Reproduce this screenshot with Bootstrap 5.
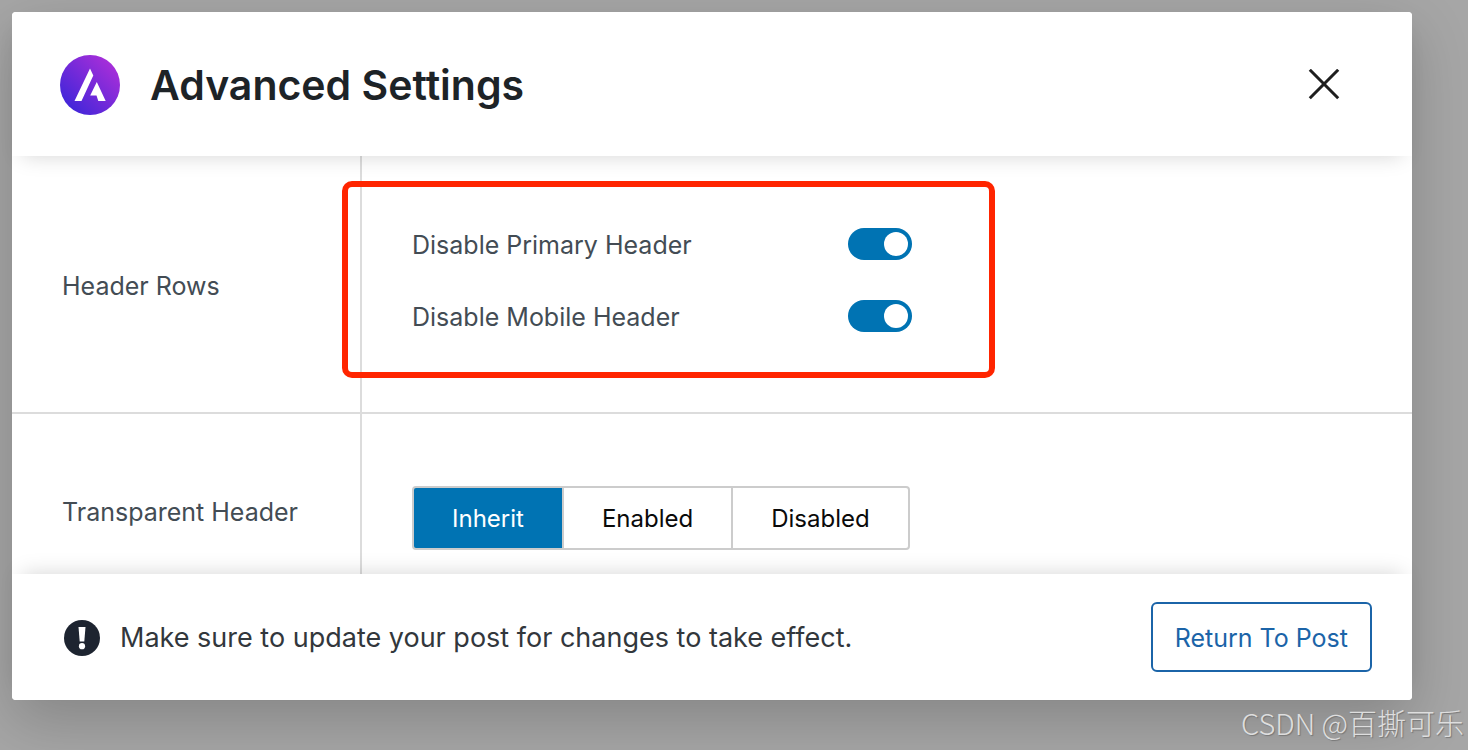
<!DOCTYPE html>
<html lang="en">
<head>
<meta charset="utf-8">
<meta name="viewport" content="width=device-width, initial-scale=1">
<title>Advanced Settings</title>
<link href="https://cdn.jsdelivr.net/npm/bootstrap@5.3.0/dist/css/bootstrap.min.css" rel="stylesheet">
<style>
  body { font-family: Inter, "Noto Sans CJK SC", sans-serif; font-size: 25px; line-height: 40px; color: #434c54; background: #a6a6a6; }
  .backdrop-area { padding: 12px 56px 50px 12px; }
  .settings-dialog { border-radius: 4px; box-shadow: 0 20px 60px rgba(0,0,0,.2); }
  .dialog-top { padding: 42px 68px 40px 48px; min-height: 144px; box-shadow: 0 10px 20px -10px rgba(0,0,0,.17); z-index: 2; }
  .dialog-top h1 { font-size: 41px; line-height: 60px; font-weight: 600; color: #1d2327; }
  .title-group { gap: 30px; }
  .close-btn { width: 40px; height: 40px; }
  .setting-row { border-bottom: 2px solid #dcdcdc; }
  .setting-name { width: 350px; padding: 0 50px; border-right: 2px solid #dcdcdc; }
  .toggle-cell { padding: 68px 50px 76px; }
  .toggle-list { max-width: 500px; gap: 32px; }
  .toggle-list label { padding-top: 2px; line-height: 38px; }
  .choice-cell { padding: 72px 50px 60px; }
  .form-switch .form-check-input.toggle { width: 64px; height: 32px; border: 0; background-color: #0073b3;
    background-image: url("data:image/svg+xml,%3csvg xmlns='http://www.w3.org/2000/svg' viewBox='0 0 32 32'%3e%3ccircle r='12' cx='16' cy='16' fill='%23fff'/%3e%3c/svg%3e"); background-size: 32px 32px; }
  .highlight-box { left: -20px; top: 25px; width: 653px; height: 197px; border: 6px solid #ff2500; border-radius: 10px; pointer-events: none; }
  .choices .btn { --bs-btn-border-width: 2px; --bs-btn-border-color: #ccc; --bs-btn-color: #0a0a0a; --bs-btn-bg: #fff; --bs-btn-hover-border-color: #ccc;
    --bs-btn-active-bg: #0073b3; --bs-btn-active-border-color: #ccc; --bs-btn-active-color: #fff; --bs-btn-border-radius: 4px;
    font-size: 24px; line-height: 40px; padding: 11px 38px 9px; }
  .choices .btn + .btn { margin-left: -2px !important; }
  .dialog-bottom { padding: 28px 40px 28px 52px; box-shadow: 0 -10px 20px -10px rgba(0,0,0,.17); z-index: 2; }
  .notice { gap: 20px; padding-top: 2px; font-size: 27px; color: #32373c; }
  .return-btn { --bs-btn-color: #1b64a8; --bs-btn-border-color: #1b64a8; --bs-btn-border-width: 2px; --bs-btn-border-radius: 6px; font-size: 25px; line-height: 40px; padding: 14px 22px 12px; }
  .watermark { right: 4px; bottom: 8px; font-family: "Noto Sans CJK SC", sans-serif; font-weight: 300; font-size: 29px; color: #dedede; text-shadow: 1px 1px 1px #777; z-index: 3; }
</style>
</head>
<body>
<div class="backdrop-area vh-100 position-relative overflow-hidden">
  <main class="settings-dialog bg-white h-100 d-flex flex-column">
    <header class="dialog-top d-flex align-items-center justify-content-between bg-white position-relative rounded-top-1">
      <div class="title-group d-flex align-items-center">
        <svg width="60" height="60" viewBox="0 0 60 60" aria-hidden="true">
          <defs><linearGradient id="brand" x1="0.15" y1="0.85" x2="0.85" y2="0.15"><stop offset="0" stop-color="#4426d9"/><stop offset="1" stop-color="#a52ed9"/></linearGradient></defs>
          <circle cx="30" cy="30" r="30" fill="url(#brand)"/>
          <path fill="#fff" d="M30 13.500L33.300 20.500L21.500 46H14.500ZM36.800 27L45.700 46H38.300L36.500 40.500H30.200Z"/>
        </svg>
        <h1 class="mb-0">Advanced Settings</h1>
      </div>
      <button type="button" class="close-btn btn p-0 border-0 d-flex align-items-center justify-content-center" aria-label="Close">
        <svg width="32" height="32" viewBox="0 0 32 32" fill="none" stroke="#1e1e1e" stroke-width="3" aria-hidden="true"><path d="M1.800 .8L30.200 29.200M30.200 .8L1.800 29.200"/></svg>
      </button>
    </header>
    <div class="flex-fill overflow-hidden">
      <section class="setting-row d-flex">
        <div class="setting-name pt-1 flex-shrink-0 d-flex align-items-center text-nowrap">Header Rows</div>
        <div class="toggle-cell flex-fill position-relative">
          <div class="toggle-list d-flex flex-column">
            <div class="form-check form-switch form-check-reverse d-flex align-items-center justify-content-between m-0 p-0">
              <label class="form-check-label" for="primary">Disable Primary Header</label>
              <input class="form-check-input toggle m-0" type="checkbox" role="switch" id="primary" checked>
            </div>
            <div class="form-check form-switch form-check-reverse d-flex align-items-center justify-content-between m-0 p-0">
              <label class="form-check-label" for="mobile">Disable Mobile Header</label>
              <input class="form-check-input toggle m-0" type="checkbox" role="switch" id="mobile" checked>
            </div>
          </div>
          <div class="highlight-box position-absolute"></div>
        </div>
      </section>
      <section class="setting-row d-flex">
        <div class="setting-name flex-shrink-0 d-flex align-items-center text-nowrap">Transparent Header</div>
        <div class="choice-cell flex-fill">
          <div class="choices btn-group" role="group" aria-label="Transparent Header">
            <button type="button" class="btn active" aria-pressed="true">Inherit</button>
            <button type="button" class="btn" aria-pressed="false">Enabled</button>
            <button type="button" class="btn" aria-pressed="false">Disabled</button>
          </div>
        </div>
      </section>
    </div>
    <footer class="dialog-bottom d-flex align-items-center justify-content-between bg-white position-relative rounded-bottom-1">
      <div class="notice d-flex align-items-center">
        <svg width="36" height="36" viewBox="0 0 36 36" aria-hidden="true"><circle cx="18" cy="18" r="18" fill="#1d2430"/><path fill="#fff" d="M14.500 7H21.500L20.300 21.500H15.700Z"/><circle cx="18" cy="26.200" r="3.100" fill="#fff"/></svg>
        <span>Make sure to update your post for changes to take effect.</span>
      </div>
      <button type="button" class="return-btn btn">Return To Post</button>
    </footer>
  </main>
  <div class="watermark position-absolute">CSDN @百撕可乐</div>
</div>
<script src="https://cdn.jsdelivr.net/npm/bootstrap@5.3.0/dist/js/bootstrap.bundle.min.js"></script>
</body>
</html>
